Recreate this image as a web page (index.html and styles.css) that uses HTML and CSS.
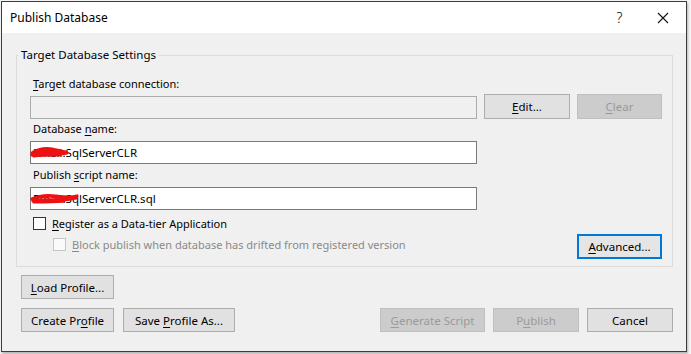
FILE: index.html
```html
<!DOCTYPE html>
<html>
<head>
<meta charset="utf-8">
<link rel="stylesheet" href="styles.css">
</head>
<body>
<div class="dialog">
  <div class="titlebar">
    <span class="title">Publish Database</span>
    <span class="help">?</span>
    <span class="close"><svg width="12" height="12" viewBox="0 0 12 12"><path d="M1 1 L11 11 M11 1 L1 11" stroke="#111" stroke-width="1.1" fill="none"/></svg></span>
  </div>
  <div class="content">
    <fieldset class="group">
      <legend>Target Database Settings</legend>
      <div class="group-body">
        <div class="label"><u>T</u>arget database connection:</div>
        <div class="row conn-row">
          <div class="field disabled-field"></div>
          <button class="btn edit"><span><u>E</u>dit...</span></button>
          <button class="btn clear" disabled><span><u>C</u>lear</span></button>
        </div>
        <div class="label l2">Database <u>n</u>ame:</div>
        <div class="field name-field">
          <span class="value">Email.SqlServerCLR</span>
          <svg class="scribble s1" width="40" height="16" viewBox="0 0 40 16"><path d="M2 9 C8 5 14 4 22 5 C28 6 32 8 36 8 M2 11 C10 8 18 8 26 9 C30 10 33 10 37 9 M5 7 C12 5 20 5 27 7 M4 12 C12 11 20 11 30 11" stroke="#ee1111" stroke-width="3.2" fill="none" stroke-linecap="round"/></svg>
        </div>
        <div class="label l3">Publish <u>s</u>cript name:</div>
        <div class="field script-field">
          <span class="value">Email.SqlServerCLR.sql</span>
          <svg class="scribble s2" width="50" height="16" viewBox="0 0 50 16"><path d="M2 9 C10 5 18 5 26 6 C34 7 40 8 47 6 M3 11 C12 9 22 10 30 10 C36 10 42 9 46 8 M8 7 C16 5 24 6 32 8 M4 12 C14 12 24 12 34 11" stroke="#ee1111" stroke-width="3.2" fill="none" stroke-linecap="round"/></svg>
        </div>
        <div class="check-row">
          <span class="box"></span>
          <span class="check-text"><u>R</u>egister as a Data-tier Application</span>
        </div>
        <div class="last-row">
          <div class="check-row sub">
            <span class="box disabled-box"></span>
            <span class="check-text disabled-text"><u>B</u>lock publish when database has drifted from registered version</span>
          </div>
          <button class="btn advanced"><span><u>A</u>dvanced...</span></button>
        </div>
      </div>
    </fieldset>
    <div class="bottom">
      <div class="brow">
        <button class="btn load"><span><u>L</u>oad Profile...</span></button>
      </div>
      <div class="brow brow2">
        <div class="left-btns">
          <button class="btn create"><span>Create Pr<u>o</u>file</span></button>
          <button class="btn save"><span>Save <u>P</u>rofile As...</span></button>
        </div>
        <div class="right-btns">
          <button class="btn gen" disabled><span><u>G</u>enerate Script</span></button>
          <button class="btn publish" disabled><span>P<u>u</u>blish</span></button>
          <button class="btn cancel"><span>Cancel</span></button>
        </div>
      </div>
    </div>
  </div>
</div>
</body>
</html>
```

FILE: styles.css
```css
* { box-sizing: border-box; }
html, body { margin: 0; padding: 0; }
body {
  background: #f4f4f4;
  font-family: "Noto Sans", "Open Sans", sans-serif;
  font-size: 11px;
  color: #000;
  width: 691px;
  height: 354px;
  overflow: hidden;
}
u { text-decoration: underline; text-underline-offset: 2px; }
.dialog {
  margin: 1px 0 0 1px;
  width: 686px;
  height: 351px;
  border: 1px solid #3c3c3c;
  display: flex;
  flex-direction: column;
  background: #f0f0f0;
  box-shadow: 1px 2px 2px rgba(0,0,0,0.25);
}
.titlebar {
  height: 31px;
  background: #fff;
  display: flex;
  align-items: center;
  padding-left: 8px;
}
.title { font-size: 12px; flex: 1; }
.help {
  width: 46px;
  text-align: center;
  font-size: 14px;
  font-weight: 300;
  padding-left: 5px;
}
.close {
  width: 46px;
  height: 31px;
  display: flex;
  align-items: center;
  justify-content: center;
}
.content {
  flex: 1;
  padding: 14px 13px 0 14px;
  display: flex;
  flex-direction: column;
}
.group {
  margin: 0;
  padding: 0;
  border: 1px solid #dcdcdc;
  min-inline-size: 0;
  height: 220px;
}
.group legend {
  margin-left: 1px;
  padding: 0 3px;
  line-height: 16px;
  font-size: 11.5px;
}
.group-body {
  padding: 13px 10px 7px 13px;
  display: flex;
  flex-direction: column;
}
.label {
  line-height: 16px;
  height: 16px;
  padding-left: 3px;
}
.l2 { margin-top: 2px; }
.l3 { margin-top: 3px; }
.row {
  display: flex;
  align-items: flex-end;
  gap: 7px;
  margin-top: 2px;
  height: 25px;
}
.field {
  width: 447px;
  height: 23px;
  border: 1px solid #7a7a7a;
  background: #fff;
  position: relative;
  display: flex;
  align-items: center;
  padding-left: 2px;
  font-size: 11.5px;
}
.disabled-field {
  background: #f0f0f0;
  border-color: #acacac;
}
.name-field, .script-field { margin-top: 4px; }
.value { white-space: nowrap; }
.scribble {
  position: absolute;
  left: -1px;
  top: 2px;
}
.btn {
  font-family: inherit;
  font-size: 11.5px;
  background: #e1e1e1;
  border: 1px solid #adadad;
  color: #000;
  height: 25px;
  padding: 0;
  margin: 0;
  display: flex;
  align-items: center;
  justify-content: center;
  white-space: nowrap;
}
.btn:disabled {
  background: #cccccc;
  border-color: #bfbfbf;
  color: #9a9a9a;
}
.edit { width: 86px; }
.clear { width: 85px; }
.check-row {
  display: flex;
  align-items: center;
  height: 16px;
  margin-top: 5px;
  padding-left: 3px;
  gap: 6px;
}
.box {
  width: 13px;
  height: 13px;
  border: 1px solid #333;
  background: #fff;
}
.disabled-box {
  border-color: #c6c6c6;
  background: #fafafa;
}
.disabled-text { color: #8a8a8a; }
.last-row {
  display: flex;
  justify-content: space-between;
  align-items: flex-start;
  margin-top: 3px;
  height: 25px;
}
.check-row.sub {
  margin-top: 2px;
  padding-left: 23px;
}
.advanced {
  width: 85px;
  border: 2px solid #0078d7;
  background: #e5e5e5;
}
.bottom {
  display: flex;
  flex-direction: column;
  padding-left: 5px;
  padding-top: 8px;
  gap: 9px;
}
.brow {
  display: flex;
  height: 24px;
}
.brow .btn { height: 24px; }
.brow2 { justify-content: space-between; }
.left-btns { display: flex; gap: 9px; }
.right-btns { display: flex; gap: 8px; }
.load { width: 93px; }
.create { width: 93px; }
.save { width: 112px; }
.gen { width: 105px; }
.publish { width: 86px; }
.cancel { width: 86px; }
```
